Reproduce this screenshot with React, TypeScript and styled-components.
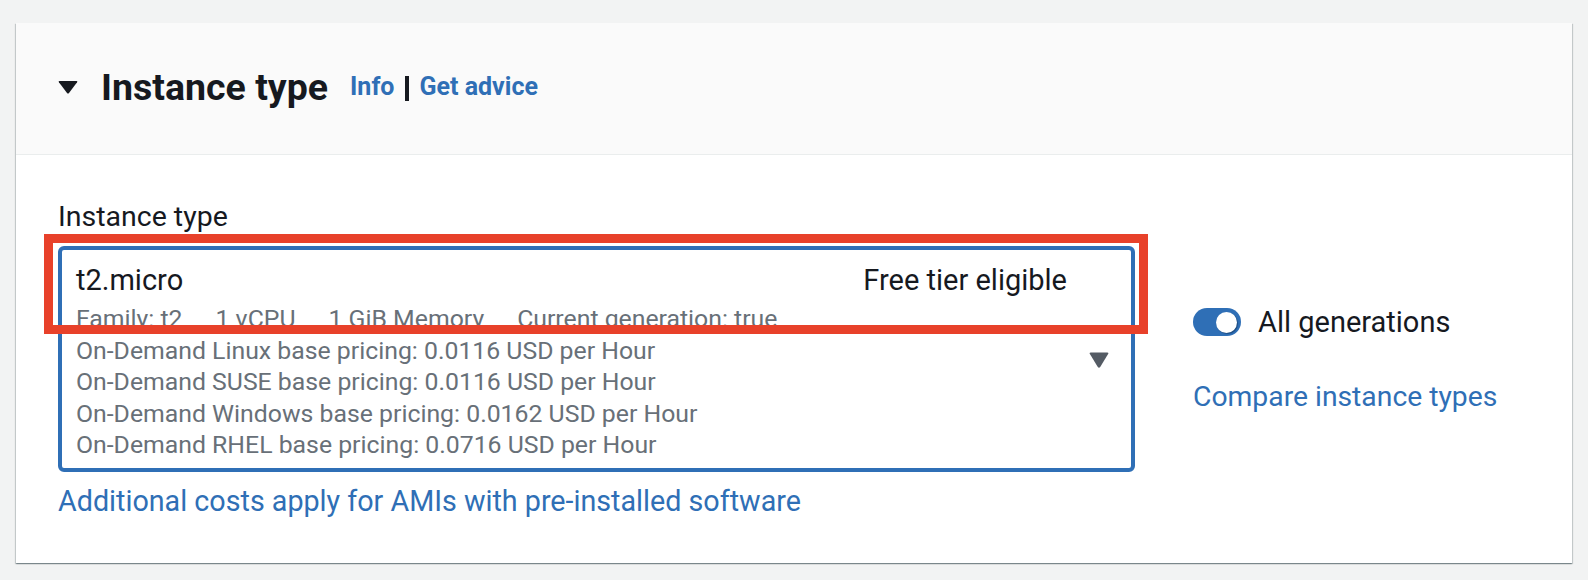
import styled, { createGlobalStyle } from "styled-components";

const GlobalStyle = createGlobalStyle`
  html, body {
    margin: 0;
    padding: 0;
    background: #f2f3f3;
    font-family: Roboto, "Liberation Sans", sans-serif;
    color: #16191f;
  }
`;

const Page = styled.div`
  padding: 23px 16px 17px 16px;
`;

const Card = styled.section`
  height: 540px;
  background: #ffffff;
  box-shadow: 0 1px 1px 0 rgba(0, 28, 36, 0.3), 1px 1px 1px 0 rgba(0, 28, 36, 0.15),
    -1px 1px 1px 0 rgba(0, 28, 36, 0.15);
`;

const Header = styled.header`
  display: flex;
  align-items: center;
  height: 132px;
  box-sizing: border-box;
  padding: 1px 0 5px 42px;
  background: #fafafa;
  border-bottom: 1px solid #eaeded;
`;

const Caret = styled.svg`
  width: 20px;
  height: 14px;
  margin-right: 23px;
  flex-shrink: 0;
`;

const Title = styled.h2`
  margin: 0 22px 0 0;
  font-size: 37.5px;
  font-weight: 700;
  line-height: 44px;
  color: #16191f;
`;

const HeaderLink = styled.a`
  font-size: 25px;
  font-weight: 700;
  color: #2f6fb6;
  text-decoration: none;
  cursor: pointer;
`;

const Divider = styled.span`
  width: 4px;
  height: 25px;
  margin: 4px 10px 0 11px;
  background: #16191f;
`;

const Body = styled.div`
  padding: 42px 0 0 42px;
`;

const Label = styled.div`
  font-size: 28.5px;
  line-height: 40px;
  color: #16191f;
  margin-bottom: 9px;
`;

const Row = styled.div`
  display: flex;
  align-items: flex-start;
  gap: 58px;
`;

const SelectColumn = styled.div`
  position: relative;
  width: 1077px;
`;

const Select = styled.div`
  display: flex;
  align-items: center;
  box-sizing: border-box;
  height: 226px;
  padding: 8px 22px 7px 14px;
  border: 4px solid #2f6fb6;
  border-radius: 6px;
  background: #ffffff;
`;

const Option = styled.div`
  flex: 1;
  align-self: flex-start;
`;

const OptionTop = styled.div`
  display: flex;
  justify-content: space-between;
  font-size: 29px;
  line-height: 45px;
  color: #16191f;
`;

const Tags = styled.div`
  display: flex;
  gap: 33px;
`;

const Meta = styled.div`
  font-size: 24.8px;
  line-height: 31.5px;
  color: #687078;
  white-space: nowrap;
`;

const DropIcon = styled.svg`
  width: 20px;
  height: 16px;
  margin-left: 22px;
  flex-shrink: 0;
`;

const Highlight = styled.div`
  position: absolute;
  left: -14px;
  top: -12px;
  width: 1104px;
  height: 100px;
  box-sizing: border-box;
  border: 9px solid #e8412a;
  pointer-events: none;
`;

const Link = styled.a<{ $size?: number }>`
  display: block;
  font-size: ${(p) => p.$size ?? 28.7}px;
  line-height: 40px;
  color: #2f6fb6;
  text-decoration: none;
  cursor: pointer;
`;

const FooterLink = styled(Link)`
  margin-top: 9px;
`;

const Side = styled.div`
  padding-top: 56px;
  display: flex;
  flex-direction: column;
  gap: 35px;
`;

const ToggleRow = styled.label`
  display: flex;
  align-items: center;
  gap: 17px;
  font-size: 29px;
  line-height: 40px;
  color: #16191f;
`;

const Toggle = styled.span<{ $on: boolean }>`
  display: flex;
  align-items: center;
  justify-content: ${(p) => (p.$on ? "flex-end" : "flex-start")};
  width: 48px;
  height: 28px;
  box-sizing: border-box;
  padding: 0 4px;
  border-radius: 14px;
  background: ${(p) => (p.$on ? "#2f6fb6" : "#aab7b8")};
`;

const Knob = styled.span`
  width: 21px;
  height: 21px;
  border-radius: 50%;
  background: #ffffff;
  box-shadow: 1px 1px 1px rgba(0, 28, 60, 0.45);
`;

const pricing = [
  ["Linux", "0.0116"],
  ["SUSE", "0.0116"],
  ["Windows", "0.0162"],
  ["RHEL", "0.0716"],
];

export default function App() {
  return (
    <>
      <GlobalStyle />
      <Page>
        <Card>
          <Header>
            <Caret viewBox="0 0 20 14">
              <path
                d="M1.5 1 H18.5 Q19.8 1 19.1 2.2 L11 13 Q10 14.2 9 13 L0.9 2.2 Q0.2 1 1.5 1 Z"
                fill="#16191f"
              />
            </Caret>
            <Title>Instance type</Title>
            <HeaderLink>Info</HeaderLink>
            <Divider />
            <HeaderLink>Get advice</HeaderLink>
          </Header>

          <Body>
            <Label>Instance type</Label>
            <Row>
              <SelectColumn>
                <Select>
                  <Option>
                    <OptionTop>
                      <span>t2.micro</span>
                      <span>Free tier eligible</span>
                    </OptionTop>
                    <Meta>
                      <Tags>
                        <span>Family: t2</span>
                        <span>1 vCPU</span>
                        <span>1 GiB Memory</span>
                        <span>Current generation: true</span>
                      </Tags>
                    </Meta>
                    {pricing.map(([os, price]) => (
                      <Meta key={os}>
                        On-Demand {os} base pricing: {price} USD per Hour
                      </Meta>
                    ))}
                  </Option>
                  <DropIcon viewBox="0 0 20 16">
                    <path
                      d="M1.8 0.5 H18.2 Q20 0.5 19.1 2 L11.2 15 Q10 16.6 8.8 15 L0.9 2 Q0 0.5 1.8 0.5 Z"
                      fill="#545b64"
                    />
                  </DropIcon>
                </Select>
                <Highlight />
                <FooterLink>Additional costs apply for AMIs with pre-installed software</FooterLink>
              </SelectColumn>

              <Side>
                <ToggleRow>
                  <Toggle $on>
                    <Knob />
                  </Toggle>
                  All generations
                </ToggleRow>
                <Link $size={28.3}>Compare instance types</Link>
              </Side>
            </Row>
          </Body>
        </Card>
      </Page>
    </>
  );
}
